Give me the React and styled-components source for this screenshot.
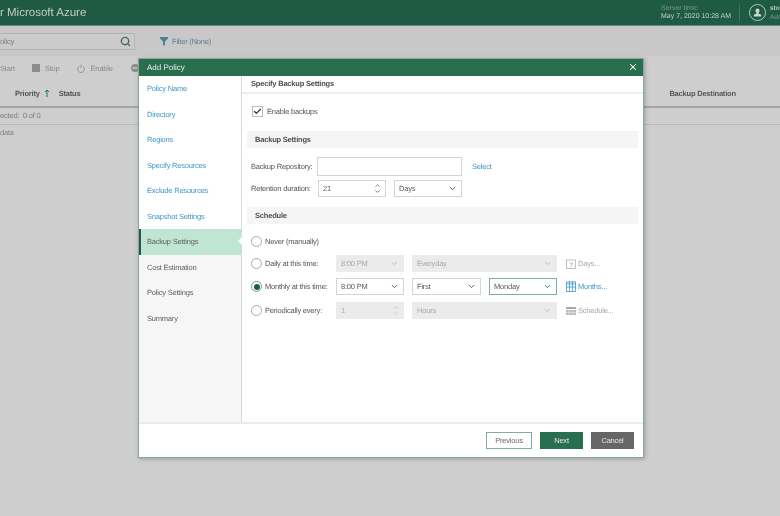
import styled, { createGlobalStyle } from 'styled-components';
import { Check, ChevronDown, ChevronUp, Search, X } from 'lucide-react';

const GlobalStyle = createGlobalStyle`
	html, body {
		margin: 0;
		height: 516px;
		overflow: hidden;
		background: #cfcfcf;
		font-family: 'Liberation Sans', Arial, sans-serif;
		text-rendering: geometricPrecision;
	}
`;

const Page = styled.div`
	position: relative;
	width: 780px;
	height: 516px;
	overflow: hidden;
	background: #cecece;
	color: #555555;
	font-size: 7.5px;
	letter-spacing: -0.2px;
	filter: blur(0.3px);
`;

const Header = styled.header`
	display: flex;
	align-items: center;
	height: 25px;
	background: #1f5a45;
	border-bottom: 1px solid #5f8a78;
	letter-spacing: 0;
`;

const Brand = styled.div`
	flex: 1;
	font-size: 11.5px;
	color: #bfcdc7;
	white-space: nowrap;
`;

const ServerTime = styled.div`
	width: 78px;
	font-size: 7px;
	line-height: 8px;
	color: #c3d0cb;
	white-space: nowrap;

	span {
		display: block;
		color: #7d9a8e;
	}
`;

const HeaderDivider = styled.div`
	width: 1px;
	height: 17px;
	background: #3f7360;
`;

const Avatar = styled.div`
	display: flex;
	align-items: center;
	justify-content: center;
	box-sizing: border-box;
	width: 17px;
	height: 17px;
	margin: 0 4px 0 9px;
	border: 1px solid #b9c8c2;
	border-radius: 50%;
`;

const UserName = styled.div`
	width: 10px;
	overflow: hidden;
	font-size: 6.5px;
	line-height: 9px;
	font-weight: 700;
	color: #b9c8c2;

	span {
		display: block;
		font-weight: 400;
		color: #7d9a8e;
	}
`;

const FilterBar = styled.div`
	display: flex;
	align-items: center;
	height: 30px;
	background: #c8c8c8;
`;

const SearchBox = styled.div`
	display: flex;
	align-items: center;
	justify-content: space-between;
	box-sizing: border-box;
	width: 135px;
	height: 17px;
	padding-right: 3px;
	border: 1px solid #b3b3b3;
	border-left: none;
	background: #cbcbcb;
	color: #7d7d7d;
`;

const FilterLink = styled.div`
	display: flex;
	align-items: center;
	gap: 4px;
	margin-left: 25px;
	color: #5d8296;
`;

const Toolbar = styled.div`
	display: flex;
	align-items: center;
	height: 24px;
	color: #8a8a8a;
`;

const ToolItem = styled.div`
	display: flex;
	align-items: center;
	gap: 5px;
	margin-left: ${props => props.$offset || 0}px;
	white-space: nowrap;
`;

const TableHead = styled.div`
	display: flex;
	align-items: center;
	box-sizing: border-box;
	height: 28px;
	border-bottom: 2px solid #a6a6a6;
	font-weight: 700;
	color: #565656;
`;

const HeadCell = styled.div`
	display: flex;
	align-items: center;
	gap: 4px;
	margin-left: ${props => props.$offset}px;
	white-space: nowrap;
`;

const TableInfo = styled.div`
	height: 16px;
	line-height: 16px;
	border-bottom: 1px solid #bababa;
	color: #7c7c7c;
	white-space: nowrap;
`;

const EmptyRow = styled.div`
	height: 16px;
	line-height: 16px;
	color: #858585;
`;

const Modal = styled.div`
	position: absolute;
	left: 138px;
	top: 58px;
	display: flex;
	flex-direction: column;
	box-sizing: border-box;
	width: 506px;
	height: 400px;
	background: #fff;
	border: 1px solid #8aa99c;
	box-shadow: 1px 1px 4px rgba(0, 0, 0, 0.25);
`;

const ModalTitle = styled.div`
	display: flex;
	align-items: center;
	justify-content: space-between;
	flex-shrink: 0;
	box-sizing: border-box;
	height: 17px;
	padding: 0 5px 1px 8px;
	background: #2a6e50;
	color: #e4eee9;
	font-size: 8px;
	letter-spacing: 0;
`;

const ModalBody = styled.div`
	display: flex;
	flex: 1;
	min-height: 0;
`;

const Steps = styled.nav`
	display: flex;
	flex-direction: column;
	flex-shrink: 0;
	box-sizing: border-box;
	width: 103px;
	border-right: 1px solid #d9d9d9;
	background: #f6f6f6;
`;

const Step = styled.div`
	position: relative;
	box-sizing: border-box;
	height: 25.5px;
	line-height: 25.5px;
	padding-left: ${props => (props.$active ? 6 : 8)}px;
	border-left: ${props => (props.$active ? '2px solid #1f5a45' : 'none')};
	background: ${props => (props.$active ? '#c0e5d3' : props.$done ? '#fff' : 'transparent')};
	color: ${props => (props.$done ? '#3f97c5' : '#5f5f5f')};
	margin-right: ${props => (props.$active ? '-1px' : '0')};

	${props =>
		props.$active &&
		`&::after {
			content: '';
			position: absolute;
			right: 0;
			top: 8px;
			border: 4.5px solid transparent;
			border-right-color: #fff;
			border-left-width: 0;
		}`}
`;

const Content = styled.section`
	display: flex;
	flex-direction: column;
	flex: 1;
	min-width: 0;
`;

const ContentTitle = styled.h2`
	flex-shrink: 0;
	box-sizing: border-box;
	height: 18px;
	margin: 0;
	padding-left: 9px;
	line-height: 16px;
	border-bottom: 2px solid #eeeeee;
	font-size: 7.5px;
	font-weight: 700;
	color: #4c4c4c;
`;

const Form = styled.div`
	flex: 1;
	padding: 12px 5px 0;
`;

const CheckRow = styled.label`
	display: flex;
	align-items: center;
	gap: 4px;
	height: 11px;
	padding-left: 5px;
`;

const CheckBox = styled.span`
	display: flex;
	align-items: center;
	justify-content: center;
	box-sizing: border-box;
	width: 11px;
	height: 11px;
	border: 1px solid #bdbdbd;
	color: #2f2f2f;
`;

const SectionBand = styled.div`
	height: 17px;
	margin-top: ${props => props.$top}px;
	padding-left: 8px;
	line-height: 17px;
	background: #f5f5f5;
	font-weight: 700;
	color: #4f4f4f;
`;

const FormRow = styled.div`
	display: flex;
	align-items: center;
	margin-top: ${props => props.$top}px;
	padding-left: 4px;
`;

const FieldLabel = styled.span`
	flex-shrink: 0;
	width: ${props => props.$width}px;
	white-space: nowrap;
`;

const TextBox = styled.div`
	box-sizing: border-box;
	width: 145px;
	height: 19px;
	border: 1px solid #d4d4d4;
`;

const Link = styled.span`
	margin-left: 10px;
	color: #3f97c5;
`;

const Control = styled.div`
	display: flex;
	align-items: center;
	justify-content: space-between;
	flex-shrink: 0;
	box-sizing: border-box;
	width: ${props => props.$width}px;
	height: 17px;
	margin-left: ${props => props.$offset || 0}px;
	padding: 0 4px;
	border: 1px solid ${props => (props.$disabled ? '#ebebeb' : props.$focus ? '#7fae99' : '#d4d4d4')};
	background: ${props => (props.$disabled ? '#ebebeb' : '#fff')};
	color: ${props => (props.$disabled ? '#a8a8a8' : '#5a5a5a')};
`;

const Spin = styled.span`
	display: flex;
	flex-direction: column;
	align-items: center;
	color: ${props => (props.$disabled ? '#bdbdbd' : '#2a6e50')};

	svg {
		display: block;
		margin: -0.5px 0;
	}
`;

const Arrow = styled(ChevronDown)`
	color: ${props => (props.$disabled ? '#bdbdbd' : '#2a6e50')};
`;

const ScheduleRow = styled.div`
	display: flex;
	align-items: center;
	height: 17px;
	margin-top: ${props => props.$top}px;
	padding-left: 4px;
`;

const RadioLabel = styled.span`
	display: flex;
	align-items: center;
	gap: 3px;
	flex-shrink: 0;
	width: 85px;
	white-space: nowrap;
`;

const Radio = styled.span`
	display: flex;
	align-items: center;
	justify-content: center;
	flex-shrink: 0;
	box-sizing: border-box;
	width: 11px;
	height: 11px;
	border: 1px solid ${props => (props.$checked ? '#6f9f89' : '#a9a9a9')};
	border-radius: 50%;

	&::after {
		content: '';
		display: ${props => (props.$checked ? 'block' : 'none')};
		width: 6px;
		height: 6px;
		border-radius: 50%;
		background: #1f5a45;
	}
`;

const SideLink = styled.span`
	display: flex;
	align-items: center;
	gap: 2px;
	margin-left: 9px;
	color: ${props => (props.$active ? '#3f97c5' : '#a8a8a8')};
	white-space: nowrap;
`;

const ModalFooter = styled.footer`
	display: flex;
	align-items: center;
	justify-content: flex-end;
	gap: 8px;
	flex-shrink: 0;
	box-sizing: border-box;
	height: 35px;
	padding-right: 9px;
	border-top: 2px solid #ececec;
`;

const Button = styled.button`
	box-sizing: border-box;
	width: ${props => props.$width}px;
	height: 17px;
	padding: 0;
	border: 1px solid ${props => (props.$kind === 'outline' ? '#7fae99' : 'transparent')};
	background: ${props => (props.$kind === 'primary' ? '#2a6e50' : props.$kind === 'cancel' ? '#666666' : '#fff')};
	color: ${props => (props.$kind === 'outline' ? '#6a6a6a' : '#dfe8e4')};
	font-family: inherit;
	font-size: 7.5px;
	letter-spacing: inherit;
`;

const FunnelIcon = () => (
	<svg width="8" height="9" viewBox="0 0 9 10">
		<path d="M0 0h9v1.5L5.6 5v5L3.4 8.6V5L0 1.5z" fill="#4f7f8f" />
	</svg>
);

const StopIcon = () => (
	<svg width="8" height="8" viewBox="0 0 8 8">
		<rect width="8" height="8" fill="#8c8c8c" />
	</svg>
);

const PowerIcon = () => (
	<svg width="8" height="9" viewBox="0 0 8 9" fill="none" stroke="#969696">
		<path d="M2.2 2.2a3.4 3.4 0 1 0 3.6 0M4 0.5v3.5" />
	</svg>
);

const DisableIcon = () => (
	<svg width="8" height="8" viewBox="0 0 8 8">
		<circle cx="4" cy="4" r="4" fill="#8c8c8c" />
		<rect x="1.5" y="3.3" width="5" height="1.4" fill="#cecece" />
	</svg>
);

const UserIcon = () => (
	<svg width="9" height="9" viewBox="0 0 9 9">
		<path d="M4.5 0.5c1.4 0 2 1 2 2.2 0 1-.6 1.9-1 2.2v.7l2.7 1.2v1.7H.8V6.8l2.7-1.2v-.7c-.4-.3-1-1.2-1-2.2 0-1.2.6-2.2 2-2.2z" fill="#c9d6d1" />
	</svg>
);

const UpArrow = () => (
	<svg width="6" height="8" viewBox="0 0 6 8" fill="none" stroke="#2a6e50">
		<path d="M3 8V1M1 3l2-2 2 2" />
	</svg>
);

const DayIcon = () => (
	<svg width="10" height="10" viewBox="0 0 10 10" fill="none" stroke="#b0b0b0" strokeWidth="0.8">
		<rect x="0.5" y="1" width="9" height="8.5" />
		<path d="M3.5 4h3L4.5 8" />
	</svg>
);

const MonthIcon = () => (
	<svg width="10" height="11" viewBox="0 0 10 11" fill="none" stroke="#3f97c5" strokeWidth="0.8">
		<rect x="0.5" y="1" width="9" height="9.5" />
		<path d="M0.5 3h9M3.5 0v11M6.5 0v11M0.5 6h9" />
	</svg>
);

const TableIcon = () => (
	<svg width="10" height="8" viewBox="0 0 10 8">
		<rect width="10" height="2" fill="#a8a8a8" />
		<path d="M0 3h10v5H0z" fill="#bdbdbd" />
		<path d="M3 3v5M6.5 3v5M0 5.5h10" stroke="#ebebeb" strokeWidth="0.6" />
	</svg>
);

const stepNames = [
	'Policy Name',
	'Directory',
	'Regions',
	'Specify Resources',
	'Exclude Resources',
	'Snapshot Settings',
	'Backup Settings',
	'Cost Estimation',
	'Policy Settings',
	'Summary',
];

const ACTIVE_STEP = 6;

const Select = ({ value, width, offset, disabled, focus }) => (
	<Control $width={width} $offset={offset} $disabled={disabled} $focus={focus}>
		{value}
		<Arrow size={9} strokeWidth={2.5} $disabled={disabled} />
	</Control>
);

const Spinner = ({ value, width, disabled }) => (
	<Control $width={width} $disabled={disabled}>
		{value}
		<Spin $disabled={disabled}>
			<ChevronUp size={7} strokeWidth={2.5} />
			<ChevronDown size={7} strokeWidth={2.5} />
		</Spin>
	</Control>
);

const App = () => (
	<Page>
		<GlobalStyle />
		<Header>
			<Brand>r Microsoft Azure</Brand>
			<ServerTime>
				<span>Server time:</span>
				May 7, 2020 10:28 AM
			</ServerTime>
			<HeaderDivider />
			<Avatar>
				<UserIcon />
			</Avatar>
			<UserName>
				sto
				<span>Adr</span>
			</UserName>
		</Header>
		<FilterBar>
			<SearchBox>
				olicy
				<Search size={11} strokeWidth={3} color="#3f6f5c" />
			</SearchBox>
			<FilterLink>
				<FunnelIcon />
				Filter (None)
			</FilterLink>
		</FilterBar>
		<Toolbar>
			<ToolItem>Start</ToolItem>
			<ToolItem $offset={17}>
				<StopIcon />
				Stop
			</ToolItem>
			<ToolItem $offset={18}>
				<PowerIcon />
				Enable
			</ToolItem>
			<ToolItem $offset={18}>
				<DisableIcon />
			</ToolItem>
		</Toolbar>
		<TableHead>
			<HeadCell $offset={15}>
				Priority
				<UpArrow />
			</HeadCell>
			<HeadCell $offset={9}>Status</HeadCell>
			<HeadCell $offset={589}>Backup Destination</HeadCell>
		</TableHead>
		<TableInfo>ected:&nbsp; 0 of 0</TableInfo>
		<EmptyRow>data</EmptyRow>

		<Modal>
			<ModalTitle>
				Add Policy
				<X size={10} strokeWidth={2.5} color="#fff" />
			</ModalTitle>
			<ModalBody>
				<Steps>
					{stepNames.map((name, index) => (
						<Step key={name} $active={index === ACTIVE_STEP} $done={index < ACTIVE_STEP}>
							{name}
						</Step>
					))}
				</Steps>
				<Content>
					<ContentTitle>Specify Backup Settings</ContentTitle>
					<Form>
						<CheckRow>
							<CheckBox>
								<Check size={9} strokeWidth={3} />
							</CheckBox>
							Enable backups
						</CheckRow>
						<SectionBand $top={14}>Backup Settings</SectionBand>
						<FormRow $top={9}>
							<FieldLabel $width={66}>Backup Repository:</FieldLabel>
							<TextBox />
							<Link>Select</Link>
						</FormRow>
						<FormRow $top={4}>
							<FieldLabel $width={67}>Retention duration:</FieldLabel>
							<Spinner value="21" width={68} />
							<Select value="Days" width={68} offset={8} />
						</FormRow>
						<SectionBand $top={10}>Schedule</SectionBand>
						<ScheduleRow $top={9}>
							<RadioLabel>
								<Radio />
								Never (manually)
							</RadioLabel>
						</ScheduleRow>
						<ScheduleRow $top={5}>
							<RadioLabel>
								<Radio />
								Daily at this time:
							</RadioLabel>
							<Select value="8:00 PM" width={68} disabled />
							<Select value="Everyday" width={145} offset={8} disabled />
							<SideLink>
								<DayIcon />
								Days...
							</SideLink>
						</ScheduleRow>
						<ScheduleRow $top={6}>
							<RadioLabel>
								<Radio $checked />
								Monthly at this time:
							</RadioLabel>
							<Select value="8:00 PM" width={68} />
							<Select value="First" width={69} offset={8} />
							<Select value="Monday" width={68} offset={8} focus />
							<SideLink $active>
								<MonthIcon />
								Months...
							</SideLink>
						</ScheduleRow>
						<ScheduleRow $top={7}>
							<RadioLabel>
								<Radio />
								Periodically every:
							</RadioLabel>
							<Spinner value="1" width={68} disabled />
							<Select value="Hours" width={145} offset={8} disabled />
							<SideLink>
								<TableIcon />
								Schedule...
							</SideLink>
						</ScheduleRow>
					</Form>
				</Content>
			</ModalBody>
			<ModalFooter>
				<Button $kind="outline" $width={46}>Previous</Button>
				<Button $kind="primary" $width={43}>Next</Button>
				<Button $kind="cancel" $width={43}>Cancel</Button>
			</ModalFooter>
		</Modal>
	</Page>
);

export default App;
